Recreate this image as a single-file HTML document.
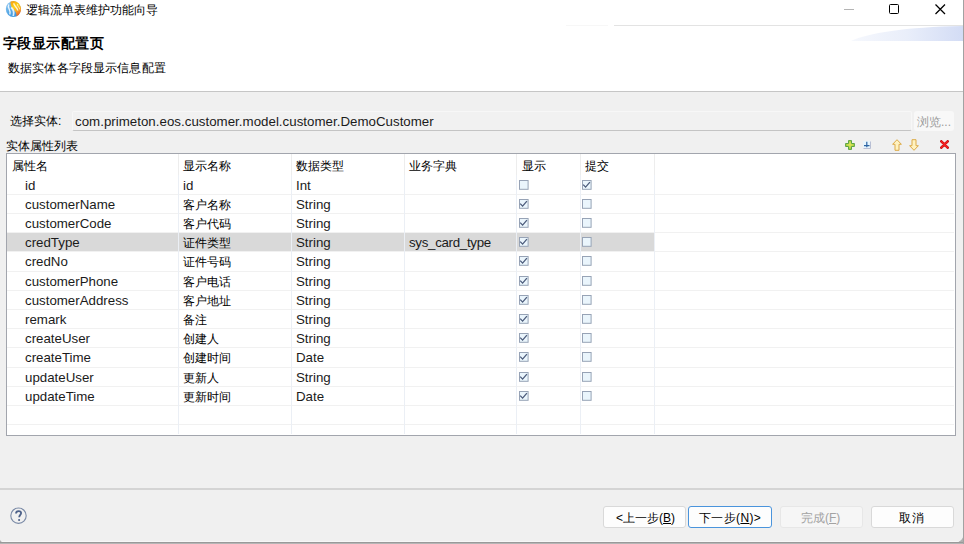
<!DOCTYPE html><html><head><meta charset="utf-8"><style>
*{margin:0;padding:0;box-sizing:border-box}
html,body{width:964px;height:544px;overflow:hidden;background:#b0b0b0}
body{position:relative;background:#b0b0b0 !important;font-family:"Liberation Sans",sans-serif;color:#000;font-size:12px}
.a{position:absolute;white-space:nowrap}
.cjk{font-size:12px;line-height:14px}
.cell{font-size:13.3px;line-height:16px;color:#1b1b1b}
</style></head><body>
<div class="a" style="left:0;top:542px;width:964px;height:1px;background:#999"></div>
<div class="a" style="left:0;top:543px;width:964px;height:1px;background:#b5b5b5"></div>
<div class="a" style="left:963px;top:0;width:1px;height:544px;background:#a2a2a2"></div>
<div class="a" id="win" style="left:0;top:0;width:963px;height:542px;overflow:hidden;border-radius:0 0 7px 4px;background:#fff">
<div class="a" style="left:566px;top:25px;width:42px;height:1px;background:#f7f7f7"></div>
<div class="a" style="left:614px;top:25px;width:349px;height:1px;background:#e3e3e3"></div>
<svg class="a" style="left:5px;top:1px" width="16" height="17" viewBox="0 0 16 17">
<defs><linearGradient id="gb" x1="0" y1="0" x2="0.7" y2="1"><stop offset="0" stop-color="#9ccdf2"/><stop offset="0.55" stop-color="#5aaae6"/><stop offset="1" stop-color="#3592dc"/></linearGradient>
<linearGradient id="go" x1="0" y1="0" x2="0.4" y2="1"><stop offset="0" stop-color="#f59a10"/><stop offset="0.45" stop-color="#ffd21a"/><stop offset="0.75" stop-color="#f8a828"/><stop offset="1" stop-color="#ee6a2a"/></linearGradient></defs>
<ellipse cx="8.3" cy="8.1" rx="7.5" ry="7.9" fill="url(#gb)"/>
<path d="M5.6 0.6 A7.5 7.9 0 0 1 11.2 15.6 C12 12.5 10.5 10.5 8.8 9 C7 7.4 5.2 4.5 5.6 0.6 Z" fill="url(#go)"/>
<path d="M3.8 3.5 C1.8 7 6.5 9 4.8 13.5" fill="none" stroke="#fff" stroke-width="1.4" opacity="0.85"/>
<path d="M6.2 6.5 C8.5 8.5 9.5 11 8.2 15" fill="none" stroke="#eef7fd" stroke-width="1.8" opacity="0.9"/>
<path d="M9 2.2 C8 4.5 12.5 6 12.8 9.5" fill="none" stroke="#fffbe6" stroke-width="1.4" opacity="0.9"/><path d="M12.5 3 C12 5 14.5 6 14.8 8.5" fill="none" stroke="#fff" stroke-width="0.9" opacity="0.7"/>
</svg>
<div class="a cjk" style="left:26px;top:3px;letter-spacing:0px">逻辑流单表维护功能向导</div>
<div class="a" style="left:844px;top:9px;width:10px;height:1px;background:#b4b4b4"></div>
<div class="a" style="left:889px;top:4px;width:10px;height:10px;border:1.3px solid #000;border-radius:1.5px"></div>
<svg class="a" style="left:935px;top:4px" width="11" height="11" viewBox="0 0 11 11"><path d="M0.5 0.5 L10 10 M10 0.5 L0.5 10" stroke="#000" stroke-width="1.25"/></svg>
<svg class="a" style="left:830px;top:26px" width="133" height="16" viewBox="0 0 133 16"><defs><linearGradient id="bl" x1="0" y1="0" x2="1" y2="0"><stop offset="0" stop-color="#f6f8fd"/><stop offset="0.5" stop-color="#e9eefa"/><stop offset="1" stop-color="#d3dcf5"/></linearGradient></defs><path d="M21 15 C38 7 75 1 133 0 V15 Z" fill="url(#bl)"/></svg>
<div class="a" style="left:3px;top:35px;font-size:14px;line-height:16px;font-weight:bold;letter-spacing:0.45px">字段显示配置页</div>
<div class="a cjk" style="left:8px;top:61px;letter-spacing:0.15px">数据实体各字段显示信息配置</div>
<div class="a" style="left:0;top:91px;width:963px;height:1px;background:#c6c6c6"></div>
<div class="a" style="left:0;top:92px;width:963px;height:451px;background:#f0f0f0"></div>
<div class="a cjk" style="left:10px;top:114px">选择实体:</div>
<div class="a" style="left:72px;top:111px;width:840px;height:20px;background:#f1f1f1;border:1px solid #f7f7f7;border-bottom:1px solid #c4c4c4;border-radius:2px"></div>
<div class="a cell" style="left:75px;top:114px;letter-spacing:0.02px">com.primeton.eos.customer.model.customer.DemoCustomer</div>
<div class="a" style="left:914px;top:111px;width:40px;height:20px;background:#f8f8f8;border-radius:3px"></div>
<div class="a cjk" style="left:917px;top:115px;color:#9c9c9c">浏览...</div>
<div class="a cjk" style="left:6px;top:139px">实体属性列表</div>
<svg class="a" style="left:845px;top:140px" width="10" height="10" viewBox="0 0 10 10"><defs><radialGradient id="pg" cx="0.5" cy="0.45" r="0.6"><stop offset="0" stop-color="#e2e85a"/><stop offset="1" stop-color="#9cc83e"/></radialGradient></defs><path d="M3.5 0.6h3v2.9h2.9v3H6.5v2.9h-3V6.5H0.6v-3h2.9z" fill="url(#pg)" stroke="#4f9e3c" stroke-width="0.9"/></svg>
<svg class="a" style="left:863px;top:141px" width="8" height="8" viewBox="0 0 8 8"><rect x="0" y="0" width="7.5" height="7" fill="#e6f4fc"/><path d="M7.5 0.5V7.5H0.5" fill="none" stroke="#b8bfd4" stroke-width="1"/><path d="M3.8 0.8V6.2M1 4.6H6.5" stroke="#2c64a4" stroke-width="1.2"/></svg>
<svg class="a" style="left:892px;top:139px" width="10" height="12" viewBox="0 0 10 12"><path d="M5 0.7 L9.4 5.3 H7 V11.3 H3 V5.3 H0.6 Z" fill="#fff2c0" stroke="#dcaa48" stroke-width="1"/></svg>
<svg class="a" style="left:909px;top:139px" width="10" height="12" viewBox="0 0 10 12"><path d="M5 11.3 L9.4 6.7 H7 V0.7 H3 V6.7 H0.6 Z" fill="#fff2c0" stroke="#dcaa48" stroke-width="1"/></svg>
<svg class="a" style="left:940px;top:140px" width="9" height="9" viewBox="0 0 9 9"><path d="M1.3 1.3 L7.7 7.7 M7.7 1.3 L1.3 7.7" stroke="#c40c10" stroke-width="2.6" stroke-linecap="round"/><path d="M1.5 1.5 L7.5 7.5 M7.5 1.5 L1.5 7.5" stroke="#f42020" stroke-width="1.5" stroke-linecap="round"/></svg>
<div class="a" style="left:6px;top:153px;width:950px;height:283px;background:#fff;border:1px solid #a2a5ad"></div>
<div class="a cjk" style="left:12px;top:159px">属性名</div>
<div class="a cjk" style="left:183px;top:159px">显示名称</div>
<div class="a cjk" style="left:296px;top:159px">数据类型</div>
<div class="a cjk" style="left:409px;top:159px">业务字典</div>
<div class="a cjk" style="left:522px;top:159px">显示</div>
<div class="a cjk" style="left:585px;top:159px">提交</div>
<div class="a" style="left:178px;top:154px;width:1px;height:21px;background:#ededed"></div>
<div class="a" style="left:291px;top:154px;width:1px;height:21px;background:#ededed"></div>
<div class="a" style="left:404px;top:154px;width:1px;height:21px;background:#ededed"></div>
<div class="a" style="left:516px;top:154px;width:1px;height:21px;background:#ededed"></div>
<div class="a" style="left:580px;top:154px;width:1px;height:21px;background:#ededed"></div>
<div class="a" style="left:654px;top:154px;width:1px;height:21px;background:#ededed"></div>
<div class="a" style="left:7px;top:194px;width:947px;height:1px;background:#f1f1f1"></div>
<div class="a" style="left:7px;top:213px;width:947px;height:1px;background:#f1f1f1"></div>
<div class="a" style="left:7px;top:232px;width:947px;height:1px;background:#f1f1f1"></div>
<div class="a" style="left:7px;top:251px;width:947px;height:1px;background:#f1f1f1"></div>
<div class="a" style="left:7px;top:271px;width:947px;height:1px;background:#f1f1f1"></div>
<div class="a" style="left:7px;top:290px;width:947px;height:1px;background:#f1f1f1"></div>
<div class="a" style="left:7px;top:309px;width:947px;height:1px;background:#f1f1f1"></div>
<div class="a" style="left:7px;top:328px;width:947px;height:1px;background:#f1f1f1"></div>
<div class="a" style="left:7px;top:347px;width:947px;height:1px;background:#f1f1f1"></div>
<div class="a" style="left:7px;top:367px;width:947px;height:1px;background:#f1f1f1"></div>
<div class="a" style="left:7px;top:386px;width:947px;height:1px;background:#f1f1f1"></div>
<div class="a" style="left:7px;top:405px;width:947px;height:1px;background:#f1f1f1"></div>
<div class="a" style="left:7px;top:424px;width:947px;height:1px;background:#f1f1f1"></div>
<div class="a" style="left:7px;top:233px;width:648px;height:18px;background:#d9d9d9"></div>
<div class="a" style="left:178px;top:175px;width:1px;height:259px;background:#ebeff5"></div>
<div class="a" style="left:291px;top:175px;width:1px;height:259px;background:#ebeff5"></div>
<div class="a" style="left:404px;top:175px;width:1px;height:259px;background:#ebeff5"></div>
<div class="a" style="left:516px;top:175px;width:1px;height:259px;background:#ebeff5"></div>
<div class="a" style="left:580px;top:175px;width:1px;height:259px;background:#ebeff5"></div>
<div class="a" style="left:654px;top:175px;width:1px;height:259px;background:#ebeff5"></div>
<div class="a cell" style="left:25px;top:178px">id</div>
<div class="a cell" style="left:183px;top:178px">id</div>
<div class="a cell" style="left:296px;top:178px">Int</div>
<div class="a" style="left:519px;top:180px;line-height:0"><svg width="10" height="10" viewBox="0 0 10 10"><rect x="0.5" y="0.5" width="8.6" height="8.8" fill="#eaf5fc" stroke="#97a3b6"/></svg></div>
<div class="a" style="left:582px;top:180px;line-height:0"><svg width="10" height="10" viewBox="0 0 10 10"><rect x="0.5" y="0.5" width="8.6" height="8.8" fill="#eaf5fc" stroke="#97a3b6"/><path d="M1.2 4.6 L3.6 7.1 L7.9 2.1" fill="none" stroke="#4b5b7a" stroke-width="1.3"/></svg></div>
<div class="a cell" style="left:25px;top:197px">customerName</div>
<div class="a cjk" style="left:183px;top:198px">客户名称</div>
<div class="a cell" style="left:296px;top:197px">String</div>
<div class="a" style="left:519px;top:199px;line-height:0"><svg width="10" height="10" viewBox="0 0 10 10"><rect x="0.5" y="0.5" width="8.6" height="8.8" fill="#eaf5fc" stroke="#97a3b6"/><path d="M1.2 4.6 L3.6 7.1 L7.9 2.1" fill="none" stroke="#4b5b7a" stroke-width="1.3"/></svg></div>
<div class="a" style="left:582px;top:199px;line-height:0"><svg width="10" height="10" viewBox="0 0 10 10"><rect x="0.5" y="0.5" width="8.6" height="8.8" fill="#eaf5fc" stroke="#97a3b6"/></svg></div>
<div class="a cell" style="left:25px;top:216px">customerCode</div>
<div class="a cjk" style="left:183px;top:217px">客户代码</div>
<div class="a cell" style="left:296px;top:216px">String</div>
<div class="a" style="left:519px;top:218px;line-height:0"><svg width="10" height="10" viewBox="0 0 10 10"><rect x="0.5" y="0.5" width="8.6" height="8.8" fill="#eaf5fc" stroke="#97a3b6"/><path d="M1.2 4.6 L3.6 7.1 L7.9 2.1" fill="none" stroke="#4b5b7a" stroke-width="1.3"/></svg></div>
<div class="a" style="left:582px;top:218px;line-height:0"><svg width="10" height="10" viewBox="0 0 10 10"><rect x="0.5" y="0.5" width="8.6" height="8.8" fill="#eaf5fc" stroke="#97a3b6"/></svg></div>
<div class="a cell" style="left:25px;top:235px">credType</div>
<div class="a cjk" style="left:183px;top:236px">证件类型</div>
<div class="a cell" style="left:296px;top:235px">String</div>
<div class="a cell" style="left:409px;top:235px;letter-spacing:-0.3px">sys_card_type</div>
<div class="a" style="left:519px;top:237px;line-height:0"><svg width="10" height="10" viewBox="0 0 10 10"><rect x="0.5" y="0.5" width="8.6" height="8.8" fill="#eaf5fc" stroke="#97a3b6"/><path d="M1.2 4.6 L3.6 7.1 L7.9 2.1" fill="none" stroke="#4b5b7a" stroke-width="1.3"/></svg></div>
<div class="a" style="left:582px;top:237px;line-height:0"><svg width="10" height="10" viewBox="0 0 10 10"><rect x="0.5" y="0.5" width="8.6" height="8.8" fill="#eaf5fc" stroke="#97a3b6"/></svg></div>
<div class="a cell" style="left:25px;top:254px">credNo</div>
<div class="a cjk" style="left:183px;top:255px">证件号码</div>
<div class="a cell" style="left:296px;top:254px">String</div>
<div class="a" style="left:519px;top:256px;line-height:0"><svg width="10" height="10" viewBox="0 0 10 10"><rect x="0.5" y="0.5" width="8.6" height="8.8" fill="#eaf5fc" stroke="#97a3b6"/><path d="M1.2 4.6 L3.6 7.1 L7.9 2.1" fill="none" stroke="#4b5b7a" stroke-width="1.3"/></svg></div>
<div class="a" style="left:582px;top:256px;line-height:0"><svg width="10" height="10" viewBox="0 0 10 10"><rect x="0.5" y="0.5" width="8.6" height="8.8" fill="#eaf5fc" stroke="#97a3b6"/></svg></div>
<div class="a cell" style="left:25px;top:274px">customerPhone</div>
<div class="a cjk" style="left:183px;top:275px">客户电话</div>
<div class="a cell" style="left:296px;top:274px">String</div>
<div class="a" style="left:519px;top:276px;line-height:0"><svg width="10" height="10" viewBox="0 0 10 10"><rect x="0.5" y="0.5" width="8.6" height="8.8" fill="#eaf5fc" stroke="#97a3b6"/><path d="M1.2 4.6 L3.6 7.1 L7.9 2.1" fill="none" stroke="#4b5b7a" stroke-width="1.3"/></svg></div>
<div class="a" style="left:582px;top:276px;line-height:0"><svg width="10" height="10" viewBox="0 0 10 10"><rect x="0.5" y="0.5" width="8.6" height="8.8" fill="#eaf5fc" stroke="#97a3b6"/></svg></div>
<div class="a cell" style="left:25px;top:293px">customerAddress</div>
<div class="a cjk" style="left:183px;top:294px">客户地址</div>
<div class="a cell" style="left:296px;top:293px">String</div>
<div class="a" style="left:519px;top:295px;line-height:0"><svg width="10" height="10" viewBox="0 0 10 10"><rect x="0.5" y="0.5" width="8.6" height="8.8" fill="#eaf5fc" stroke="#97a3b6"/><path d="M1.2 4.6 L3.6 7.1 L7.9 2.1" fill="none" stroke="#4b5b7a" stroke-width="1.3"/></svg></div>
<div class="a" style="left:582px;top:295px;line-height:0"><svg width="10" height="10" viewBox="0 0 10 10"><rect x="0.5" y="0.5" width="8.6" height="8.8" fill="#eaf5fc" stroke="#97a3b6"/></svg></div>
<div class="a cell" style="left:25px;top:312px">remark</div>
<div class="a cjk" style="left:183px;top:313px">备注</div>
<div class="a cell" style="left:296px;top:312px">String</div>
<div class="a" style="left:519px;top:314px;line-height:0"><svg width="10" height="10" viewBox="0 0 10 10"><rect x="0.5" y="0.5" width="8.6" height="8.8" fill="#eaf5fc" stroke="#97a3b6"/><path d="M1.2 4.6 L3.6 7.1 L7.9 2.1" fill="none" stroke="#4b5b7a" stroke-width="1.3"/></svg></div>
<div class="a" style="left:582px;top:314px;line-height:0"><svg width="10" height="10" viewBox="0 0 10 10"><rect x="0.5" y="0.5" width="8.6" height="8.8" fill="#eaf5fc" stroke="#97a3b6"/></svg></div>
<div class="a cell" style="left:25px;top:331px">createUser</div>
<div class="a cjk" style="left:183px;top:332px">创建人</div>
<div class="a cell" style="left:296px;top:331px">String</div>
<div class="a" style="left:519px;top:333px;line-height:0"><svg width="10" height="10" viewBox="0 0 10 10"><rect x="0.5" y="0.5" width="8.6" height="8.8" fill="#eaf5fc" stroke="#97a3b6"/><path d="M1.2 4.6 L3.6 7.1 L7.9 2.1" fill="none" stroke="#4b5b7a" stroke-width="1.3"/></svg></div>
<div class="a" style="left:582px;top:333px;line-height:0"><svg width="10" height="10" viewBox="0 0 10 10"><rect x="0.5" y="0.5" width="8.6" height="8.8" fill="#eaf5fc" stroke="#97a3b6"/></svg></div>
<div class="a cell" style="left:25px;top:350px">createTime</div>
<div class="a cjk" style="left:183px;top:351px">创建时间</div>
<div class="a cell" style="left:296px;top:350px">Date</div>
<div class="a" style="left:519px;top:352px;line-height:0"><svg width="10" height="10" viewBox="0 0 10 10"><rect x="0.5" y="0.5" width="8.6" height="8.8" fill="#eaf5fc" stroke="#97a3b6"/><path d="M1.2 4.6 L3.6 7.1 L7.9 2.1" fill="none" stroke="#4b5b7a" stroke-width="1.3"/></svg></div>
<div class="a" style="left:582px;top:352px;line-height:0"><svg width="10" height="10" viewBox="0 0 10 10"><rect x="0.5" y="0.5" width="8.6" height="8.8" fill="#eaf5fc" stroke="#97a3b6"/></svg></div>
<div class="a cell" style="left:25px;top:370px">updateUser</div>
<div class="a cjk" style="left:183px;top:371px">更新人</div>
<div class="a cell" style="left:296px;top:370px">String</div>
<div class="a" style="left:519px;top:372px;line-height:0"><svg width="10" height="10" viewBox="0 0 10 10"><rect x="0.5" y="0.5" width="8.6" height="8.8" fill="#eaf5fc" stroke="#97a3b6"/><path d="M1.2 4.6 L3.6 7.1 L7.9 2.1" fill="none" stroke="#4b5b7a" stroke-width="1.3"/></svg></div>
<div class="a" style="left:582px;top:372px;line-height:0"><svg width="10" height="10" viewBox="0 0 10 10"><rect x="0.5" y="0.5" width="8.6" height="8.8" fill="#eaf5fc" stroke="#97a3b6"/></svg></div>
<div class="a cell" style="left:25px;top:389px">updateTime</div>
<div class="a cjk" style="left:183px;top:390px">更新时间</div>
<div class="a cell" style="left:296px;top:389px">Date</div>
<div class="a" style="left:519px;top:391px;line-height:0"><svg width="10" height="10" viewBox="0 0 10 10"><rect x="0.5" y="0.5" width="8.6" height="8.8" fill="#eaf5fc" stroke="#97a3b6"/><path d="M1.2 4.6 L3.6 7.1 L7.9 2.1" fill="none" stroke="#4b5b7a" stroke-width="1.3"/></svg></div>
<div class="a" style="left:582px;top:391px;line-height:0"><svg width="10" height="10" viewBox="0 0 10 10"><rect x="0.5" y="0.5" width="8.6" height="8.8" fill="#eaf5fc" stroke="#97a3b6"/></svg></div>
<div class="a" style="left:0;top:488px;width:963px;height:2px;background:#d4d4d4"></div>
<svg class="a" style="left:10px;top:507px" width="17" height="17" viewBox="0 0 17 17"><circle cx="8.5" cy="8.7" r="7.7" fill="#f1f1f1" stroke="#7a8aa6" stroke-width="1.1"/><path d="M6 6.6 C6 4.8 7.1 4.1 8.6 4.1 C10.2 4.1 11.1 5 11.1 6.1 C11.1 7.8 9.2 8 9.2 10.3" fill="none" stroke="#4d6189" stroke-width="1.8"/><circle cx="9.1" cy="13" r="1.05" fill="#4d6189"/></svg>
<div class="a" style="left:603px;top:506px;width:83px;height:22px;background:#fdfdfd;border:1px solid #d9d9d9;border-radius:3px"></div><div class="a cjk" style="left:616px;top:511px;color:#000">&lt;上一步(<u>B</u>)</div>
<div class="a" style="left:688px;top:506px;width:84px;height:22px;background:#fdfdfd;border:1.2px solid #4a94dc;border-radius:3px"></div><div class="a cjk" style="left:699px;top:511px;color:#000"><span style="letter-spacing:0.35px">下一步(<u>N</u>)&gt;</span></div>
<div class="a" style="left:780px;top:506px;width:83px;height:22px;background:#f6f6f6;border:1px solid #e7e7e7;border-radius:3px"></div><div class="a cjk" style="left:801px;top:511px;color:#a3a3a3">完成(<u>F</u>)</div>
<div class="a" style="left:871px;top:506px;width:83px;height:22px;background:#fdfdfd;border:1px solid #d9d9d9;border-radius:3px"></div><div class="a cjk" style="left:899px;top:511px;color:#000"><span style="letter-spacing:0.6px">取消</span></div>
<div class="a" style="left:0;top:541px;width:963px;height:1px;background:#f7f7f7"></div>
</div>
</body></html>
